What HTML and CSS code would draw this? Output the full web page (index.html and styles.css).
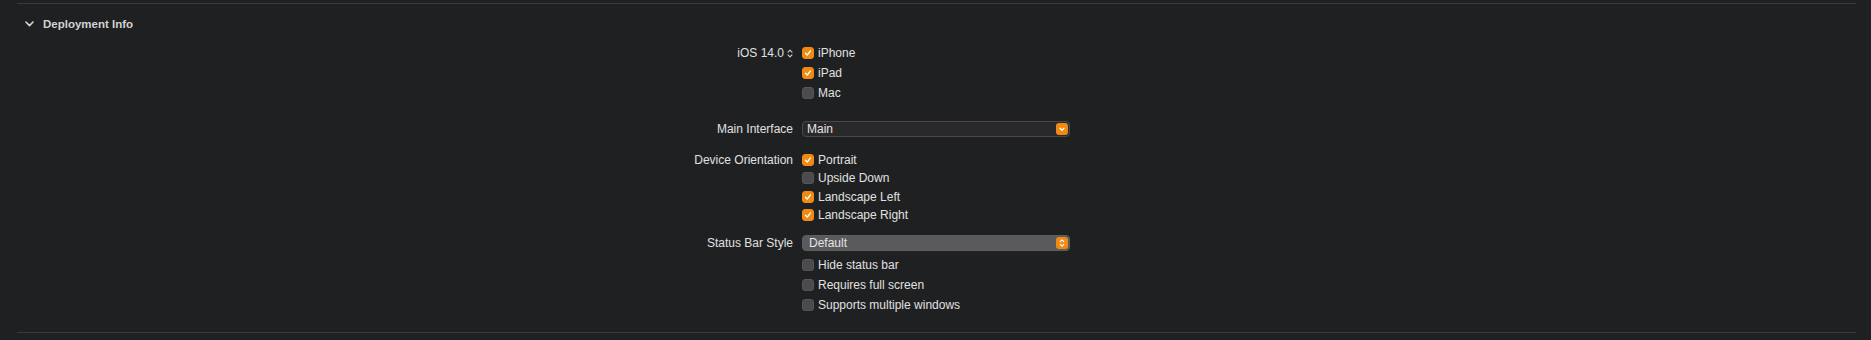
FILE: index.html
```html
<!DOCTYPE html>
<html>
<head>
<meta charset="utf-8">
<link rel="stylesheet" href="styles.css">
</head>
<body>
<div class="panel">
  <div class="rule"></div>
  <div class="section-head">
    <svg class="disclosure" width="9" height="6" viewBox="0 0 9 6"><path d="M1 1 L4.5 4.6 L8 1" fill="none" stroke="#d6d6d6" stroke-width="1.6" stroke-linecap="round" stroke-linejoin="round"/></svg>
    <span class="section-title">Deployment Info</span>
  </div>
  <div class="form">
    <div class="field rows20">
      <div class="label">iOS 14.0<svg class="stepper" width="6" height="9" viewBox="0 0 6 9"><path d="M1 3.2 L3 1.2 L5 3.2 M1 5.8 L3 7.8 L5 5.8" fill="none" stroke="#cfcfcf" stroke-width="1.1" stroke-linecap="round" stroke-linejoin="round"/></svg></div>
      <div class="controls">
        <div class="check"><span class="box on"><svg width="12" height="12" viewBox="0 0 12 12"><path d="M3 6.3 L5.1 8.6 L9 3.4" fill="none" stroke="#fff" stroke-width="1.6" stroke-linecap="round" stroke-linejoin="round"/></svg></span><span>iPhone</span></div>
        <div class="check"><span class="box on"><svg width="12" height="12" viewBox="0 0 12 12"><path d="M3 6.3 L5.1 8.6 L9 3.4" fill="none" stroke="#fff" stroke-width="1.6" stroke-linecap="round" stroke-linejoin="round"/></svg></span><span>iPad</span></div>
        <div class="check"><span class="box"></span><span>Mac</span></div>
      </div>
    </div>

    <div class="field popup-field f-main">
      <div class="label">Main Interface</div>
      <div class="controls">
        <div class="popup dark">
          <span class="popup-text">Main</span>
          <span class="popup-btn"><svg width="12" height="12" viewBox="0 0 12 12"><path d="M4 5.2 L6 7.2 L8 5.2" fill="none" stroke="#fff" stroke-width="1.3" stroke-linecap="round" stroke-linejoin="round"/></svg></span>
        </div>
      </div>
    </div>

    <div class="field rows18 f-orient">
      <div class="label">Device Orientation</div>
      <div class="controls">
        <div class="check"><span class="box on"><svg width="12" height="12" viewBox="0 0 12 12"><path d="M3 6.3 L5.1 8.6 L9 3.4" fill="none" stroke="#fff" stroke-width="1.6" stroke-linecap="round" stroke-linejoin="round"/></svg></span><span>Portrait</span></div>
        <div class="check"><span class="box"></span><span>Upside Down</span></div>
        <div class="check"><span class="box on"><svg width="12" height="12" viewBox="0 0 12 12"><path d="M3 6.3 L5.1 8.6 L9 3.4" fill="none" stroke="#fff" stroke-width="1.6" stroke-linecap="round" stroke-linejoin="round"/></svg></span><span>Landscape Left</span></div>
        <div class="check"><span class="box on"><svg width="12" height="12" viewBox="0 0 12 12"><path d="M3 6.3 L5.1 8.6 L9 3.4" fill="none" stroke="#fff" stroke-width="1.6" stroke-linecap="round" stroke-linejoin="round"/></svg></span><span>Landscape Right</span></div>
      </div>
    </div>

    <div class="field popup-field rows20 f-status">
      <div class="label">Status Bar Style</div>
      <div class="controls">
        <div class="popup light">
          <span class="popup-text">Default</span>
          <span class="popup-btn"><svg width="12" height="12" viewBox="0 0 12 12"><path d="M4.2 4.6 L6 2.9 L7.8 4.6 M4.2 7.4 L6 9.1 L7.8 7.4" fill="none" stroke="#fff" stroke-width="1.2" stroke-linecap="round" stroke-linejoin="round"/></svg></span>
        </div>
        <div class="check-list">
          <div class="check"><span class="box"></span><span>Hide status bar</span></div>
          <div class="check"><span class="box"></span><span>Requires full screen</span></div>
          <div class="check"><span class="box"></span><span>Supports multiple windows</span></div>
        </div>
      </div>
    </div>
  </div>
  <div class="rule bottom"></div>
</div>
</body>
</html>
```

FILE: styles.css
```css
html, body {
  margin: 0;
  padding: 0;
  background: #1f2022;
}

body {
  width: 1871px;
  height: 340px;
  overflow: hidden;
  font-family: "Liberation Sans", Arial, sans-serif;
  font-size: 12px;
  color: #e0e0e0;
}

.panel {
  padding-top: 3px;
}

.rule {
  height: 1px;
  background: #3a3a3c;
  margin: 0 15px 0 17px;
}

.rule.bottom {
  margin-top: 17px;
}

.section-head {
  height: 39px;
  display: flex;
  align-items: center;
  padding-left: 25px;
  gap: 9px;
}

.disclosure {
  display: block;
}

.section-title {
  font-weight: bold;
  font-size: 11.5px;
  color: #d2d2d2;
}

.form {
  display: flex;
  flex-direction: column;
}

.field {
  display: grid;
  grid-template-columns: 793px 1fr;
  column-gap: 9px;
  align-items: start;
}

.label {
  text-align: right;
  white-space: nowrap;
  display: flex;
  justify-content: flex-end;
  align-items: center;
  gap: 3px;
}

.stepper {
  display: block;
}

.rows20 .label,
.rows20 .check {
  height: 20px;
}

.rows18 .label,
.rows18 .check {
  height: 18.3px;
}

.controls {
  display: flex;
  flex-direction: column;
}

.check {
  display: flex;
  align-items: center;
  gap: 4px;
  white-space: nowrap;
}

.box {
  width: 12px;
  height: 12px;
  box-sizing: border-box;
  border-radius: 3px;
  background: #4b4b4d;
  border: 1px solid #555557;
  display: flex;
  align-items: center;
  justify-content: center;
}

.box svg {
  display: block;
}

.box.on {
  background: #f08a12;
  border-color: #f08a12;
}

.popup-field .label {
  height: 16px;
}

.f-main {
  margin-top: 18px;
}

.f-orient {
  margin-top: 14px;
}

.f-status {
  margin-top: 11px;
}

.popup {
  width: 268px;
  height: 16px;
  box-sizing: border-box;
  border-radius: 4px;
  display: flex;
  align-items: center;
  justify-content: space-between;
  padding-right: 1px;
}

.popup.dark {
  background: #29292b;
  border: 1px solid #48484a;
  padding-left: 4px;
}

.popup.light {
  background: #5a5a5c;
  border: 1px solid #5f5f61;
  padding-left: 6px;
}

.popup-text {
  color: #e4e4e4;
}

.popup-btn {
  width: 12px;
  height: 12px;
  border-radius: 3px;
  background: #f08a12;
  display: flex;
  align-items: center;
  justify-content: center;
}

.popup-btn svg {
  display: block;
}

.check-list {
  margin-top: 4px;
  display: flex;
  flex-direction: column;
}
```
